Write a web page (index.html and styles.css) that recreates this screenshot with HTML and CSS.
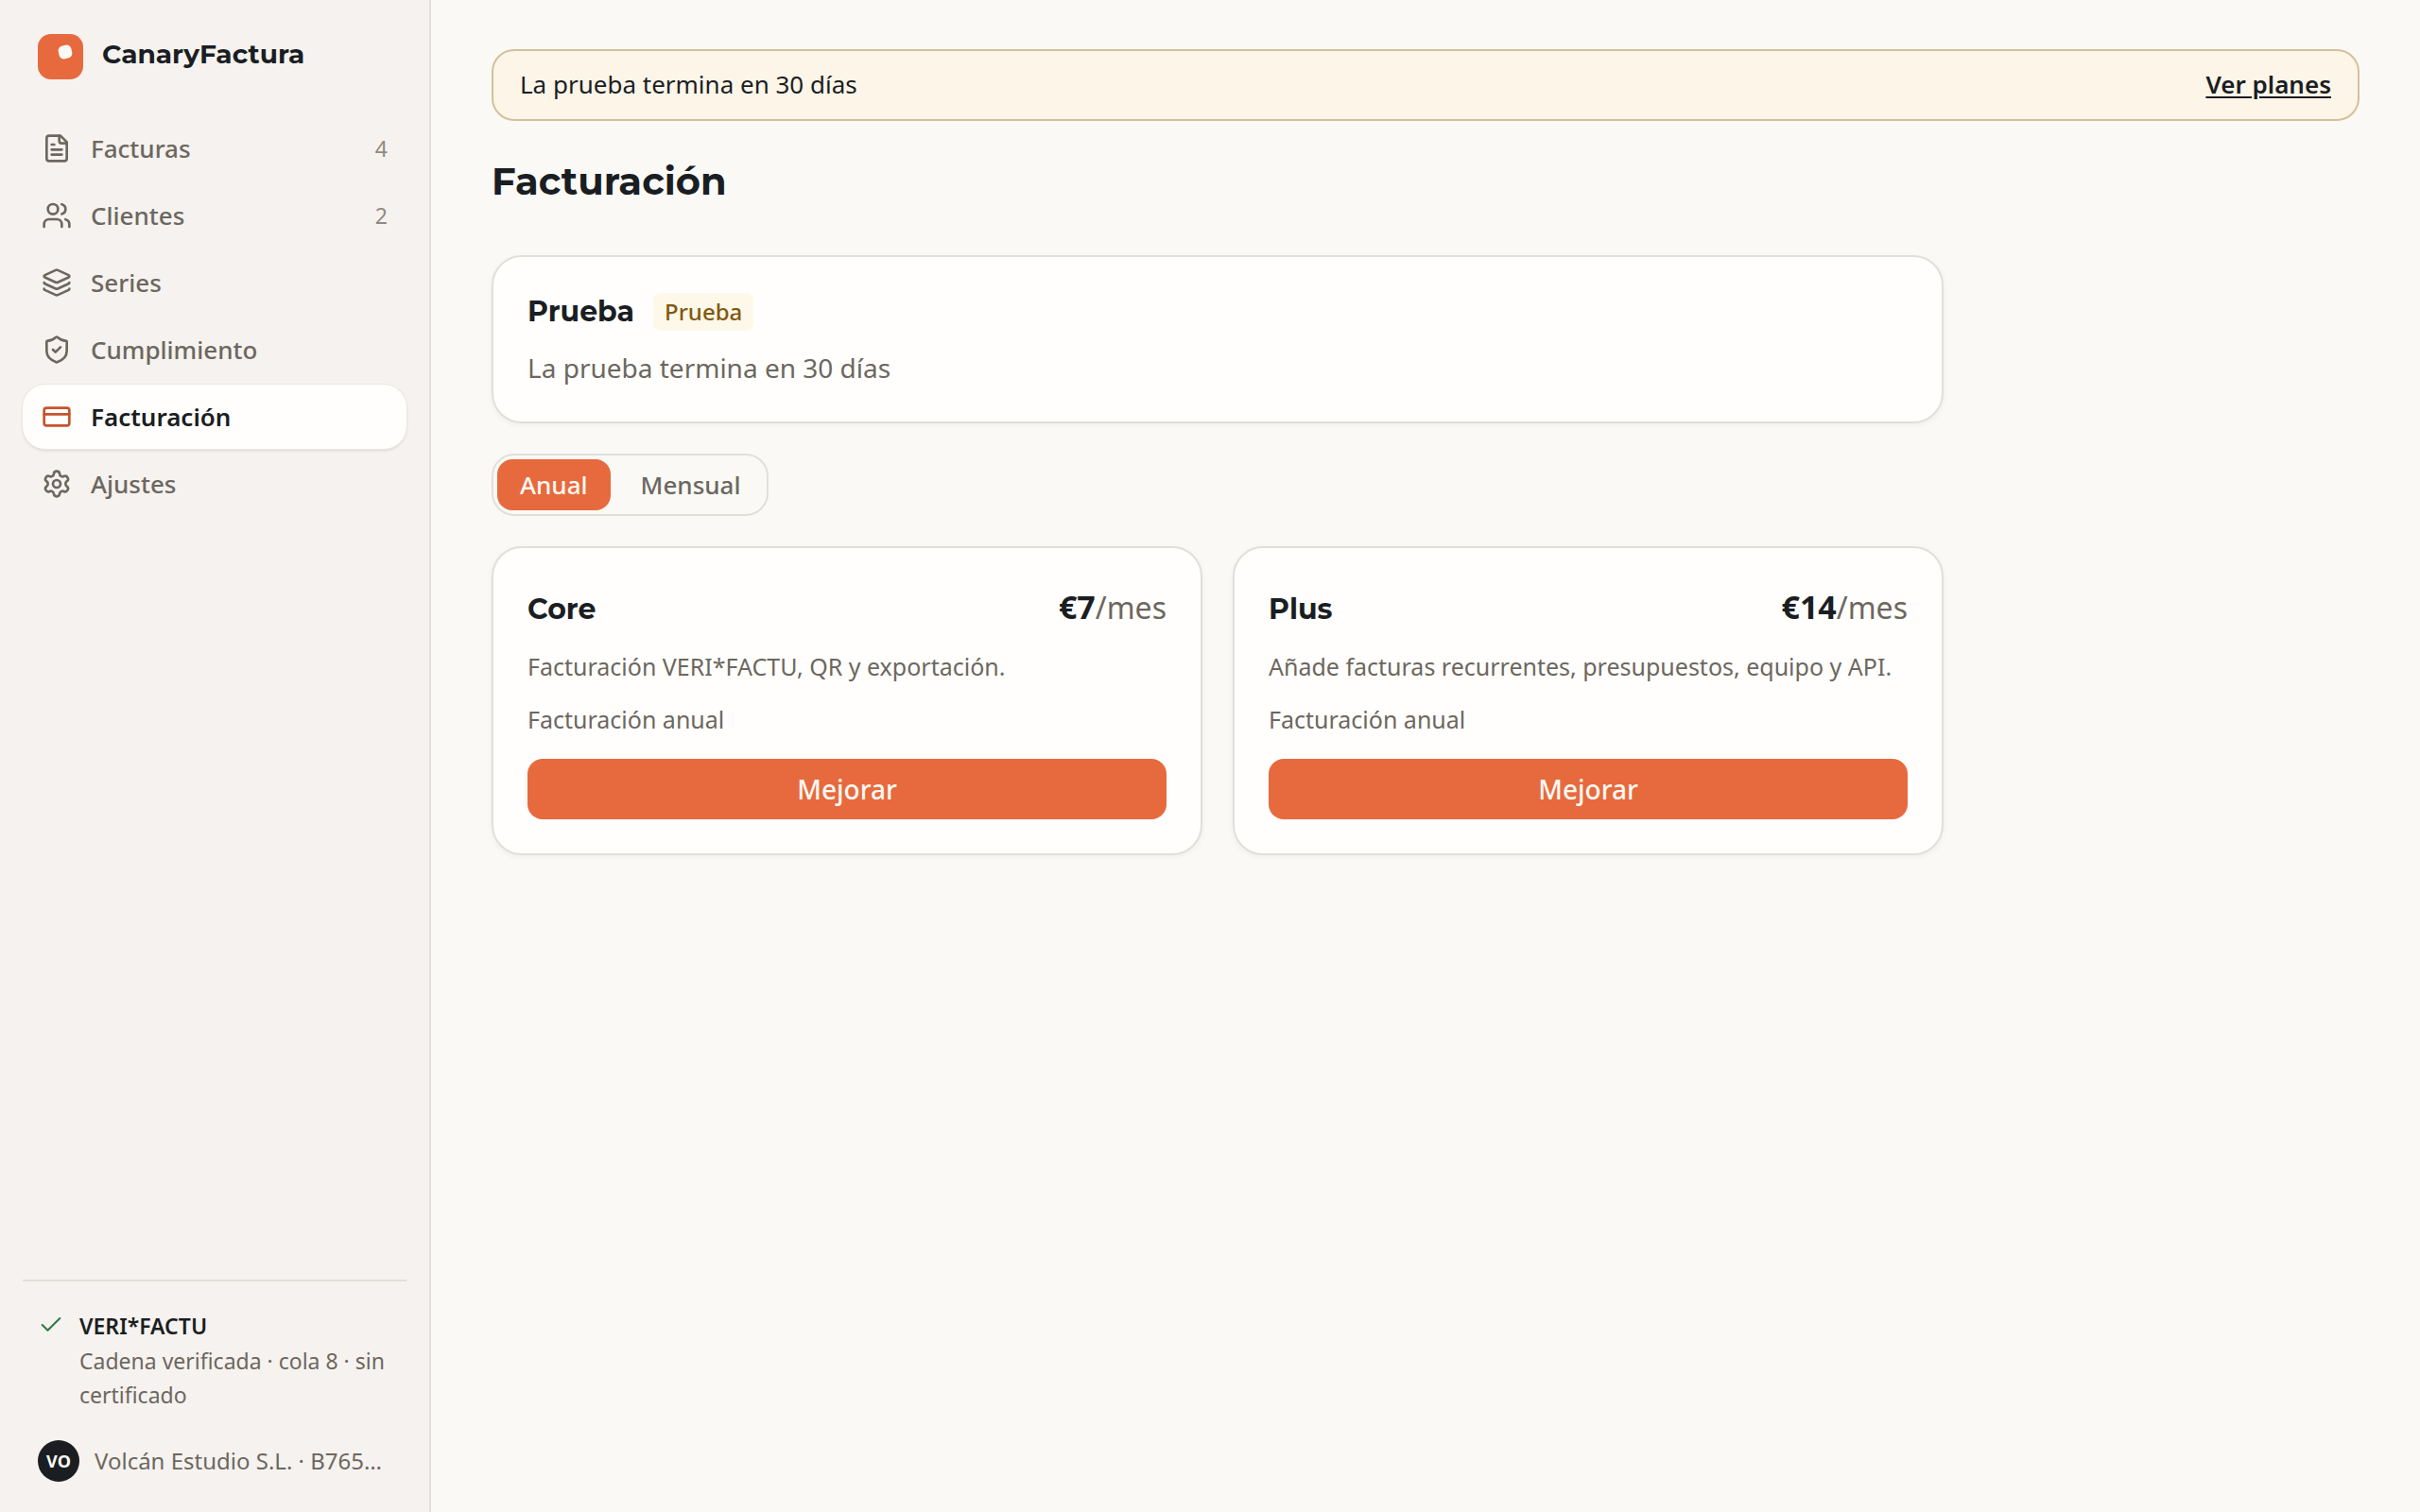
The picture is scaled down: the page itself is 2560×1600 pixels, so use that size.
FILE: index.html
```html
<!DOCTYPE html>
<html lang="es">
<head>
<meta charset="utf-8">
<meta name="viewport" content="width=device-width, initial-scale=1">
<title>Facturación</title>
<link rel="stylesheet" href="styles.css">
</head>
<body>
<div class="app">
  <aside class="sidebar">
    <a class="brand" href="#">
      <svg class="brand-mark" viewBox="0 0 48 48" aria-hidden="true">
        <rect width="48" height="48" rx="14" fill="#e66a3d"/>
        <rect x="22" y="12" width="14" height="14" rx="5" fill="#faf9f5" transform="rotate(-14 29 19)"/>
      </svg>
      <span class="brand-name">CanaryFactura</span>
    </a>
    <nav class="nav">
      <a class="nav-item" href="#">
        <svg class="icon" viewBox="0 0 24 24" aria-hidden="true"><path d="M15 2H6a2 2 0 0 0-2 2v16a2 2 0 0 0 2 2h12a2 2 0 0 0 2-2V7Z"/><path d="M14 2v4a2 2 0 0 0 2 2h4"/><path d="M10 9H8"/><path d="M16 13H8"/><path d="M16 17H8"/></svg>
        <span>Facturas</span><span class="count">4</span>
      </a>
      <a class="nav-item" href="#">
        <svg class="icon" viewBox="0 0 24 24" aria-hidden="true"><path d="M16 21v-2a4 4 0 0 0-4-4H6a4 4 0 0 0-4 4v2"/><circle cx="9" cy="7" r="4"/><path d="M22 21v-2a4 4 0 0 0-3-3.87"/><path d="M16 3.13a4 4 0 0 1 0 7.75"/></svg>
        <span>Clientes</span><span class="count">2</span>
      </a>
      <a class="nav-item" href="#">
        <svg class="icon" viewBox="0 0 24 24" aria-hidden="true"><path d="M12.83 2.18a2 2 0 0 0-1.66 0L2.6 6.08a1 1 0 0 0 0 1.83l8.58 3.91a2 2 0 0 0 1.66 0l8.58-3.9a1 1 0 0 0 0-1.83Z"/><path d="M2 12a1 1 0 0 0 .58.91l8.6 3.91a2 2 0 0 0 1.65 0l8.58-3.9A1 1 0 0 0 22 12"/><path d="M2 17a1 1 0 0 0 .58.91l8.6 3.91a2 2 0 0 0 1.65 0l8.58-3.9A1 1 0 0 0 22 17"/></svg>
        <span>Series</span>
      </a>
      <a class="nav-item" href="#">
        <svg class="icon" viewBox="0 0 24 24" aria-hidden="true"><path d="M20 13c0 5-3.5 7.5-7.66 8.95a1 1 0 0 1-.67-.01C7.5 20.5 4 18 4 13V6a1 1 0 0 1 1-1c2 0 4.5-1.2 6.24-2.72a1.17 1.17 0 0 1 1.52 0C14.51 3.81 17 5 19 5a1 1 0 0 1 1 1z"/><path d="m9 12 2 2 4-4"/></svg>
        <span>Cumplimiento</span>
      </a>
      <a class="nav-item active" href="#" aria-current="page">
        <svg class="icon" viewBox="0 0 24 24" aria-hidden="true"><rect width="20" height="14" x="2" y="5" rx="2"/><path d="M2 10h20"/></svg>
        <span>Facturación</span>
      </a>
      <a class="nav-item" href="#">
        <svg class="icon" viewBox="0 0 24 24" aria-hidden="true"><path d="M9.671 4.136a2.34 2.34 0 0 1 4.659 0 2.34 2.34 0 0 0 3.319 1.915 2.34 2.34 0 0 1 2.33 4.033 2.34 2.34 0 0 0 0 3.831 2.34 2.34 0 0 1-2.33 4.033 2.34 2.34 0 0 0-3.319 1.915 2.34 2.34 0 0 1-4.659 0 2.34 2.34 0 0 0-3.32-1.915 2.34 2.34 0 0 1-2.33-4.033 2.34 2.34 0 0 0 0-3.831A2.34 2.34 0 0 1 6.35 6.051a2.34 2.34 0 0 0 3.319-1.915"/><circle cx="12" cy="12" r="3"/></svg>
        <span>Ajustes</span>
      </a>
    </nav>
    <div class="sidebar-footer">
      <div class="status">
        <svg class="icon icon-check" viewBox="0 0 24 24" aria-hidden="true"><path d="M20 6 9 17l-5-5"/></svg>
        <div>
          <strong class="status-title">VERI*FACTU</strong>
          <p class="status-text">Cadena verificada · cola 8 · sin certificado</p>
        </div>
      </div>
      <div class="account">
        <span class="avatar">VO</span>
        <span class="account-name">Volcán Estudio S.L. · B765…</span>
      </div>
    </div>
  </aside>

  <main class="main">
    <div class="banner">
      <span>La prueba termina en 30 días</span>
      <a href="#">Ver planes</a>
    </div>
    <h1 class="page-title">Facturación</h1>
    <div class="content">
      <section class="card">
        <div class="card-head">
          <h2>Prueba</h2>
          <span class="badge">Prueba</span>
        </div>
        <p class="lead">La prueba termina en 30 días</p>
      </section>
      <div class="toggle" role="group" aria-label="Periodo">
        <button type="button" class="selected" aria-pressed="true">Anual</button>
        <button type="button" aria-pressed="false">Mensual</button>
      </div>
      <div class="plans">
        <section class="card plan">
          <div class="plan-head">
            <h2>Core</h2>
            <p class="price"><strong>€7</strong>/mes</p>
          </div>
          <p class="note">Facturación VERI*FACTU, QR y exportación.</p>
          <p class="note">Facturación anual</p>
          <button type="button" class="upgrade">Mejorar</button>
        </section>
        <section class="card plan">
          <div class="plan-head">
            <h2>Plus</h2>
            <p class="price"><strong>€14</strong>/mes</p>
          </div>
          <p class="note">Añade facturas recurrentes, presupuestos, equipo y API.</p>
          <p class="note">Facturación anual</p>
          <button type="button" class="upgrade">Mejorar</button>
        </section>
      </div>
    </div>
  </main>
</div>
</body>
</html>
```
FILE: styles.css
```css
:root {
  --bg: #faf9f5;
  --sidebar: #f6f2ef;
  --surface: #fffefc;
  --border: #e2dfdb;
  --ink: #1a1e23;
  --muted: #6c675f;
  --faint: #8f8a83;
  --accent: #e66a3d;
  --display: Montserrat, Inter, sans-serif;
}

* { box-sizing: border-box; }

body {
  margin: 0;
  background: var(--bg);
  color: var(--ink);
  font: 26px/40px "Noto Sans", sans-serif;
}

h1, h2, p { margin: 0; }
h1, h2 { font-family: var(--display); font-weight: 700; }
button { font: inherit; border: 0; background: none; cursor: pointer; }

.app { display: flex; min-height: 100vh; }

.icon {
  flex: none;
  width: 32px;
  height: 32px;
  fill: none;
  stroke: currentColor;
  stroke-width: 2;
  stroke-linecap: round;
  stroke-linejoin: round;
}

/* Sidebar */
.sidebar {
  display: flex;
  flex-direction: column;
  flex: none;
  width: 456px;
  padding: 36px 24px 32px;
  background: var(--sidebar);
  border-right: 2px solid var(--border);
}

.brand {
  display: flex;
  align-items: center;
  gap: 20px;
  padding: 0 16px;
  color: var(--ink);
  font: 700 28px/42px var(--display);
  text-decoration: none;
}
.brand-mark { width: 48px; height: 48px; }
.brand-name { padding-bottom: 6px; }

.nav {
  display: flex;
  flex-direction: column;
  gap: 3px;
  margin-top: 39px;
}
.nav-item {
  display: flex;
  align-items: center;
  gap: 20px;
  height: 68px;
  padding: 0 20px;
  border-radius: 24px;
  color: var(--muted);
  font-weight: 500;
  text-decoration: none;
}
.nav-item.active {
  background: var(--surface);
  color: var(--ink);
  font-weight: 600;
  box-shadow: 0 0 0 1px #e9e6e2, 0 2px 3px rgba(26, 30, 35, .12);
}
.nav-item.active .icon { color: #c5532f; }
.count { margin-left: auto; color: var(--faint); font-size: 23px; font-weight: 400; }

.sidebar-footer {
  margin-top: auto;
  padding: 28px 16px 0;
  border-top: 2px solid var(--border);
  font-size: 23px;
  line-height: 36px;
}
.status { display: flex; gap: 16px; }
.icon-check { width: 28px; height: 28px; margin-top: 4px; color: #2c7a4b; stroke-width: 1.75; }
.status-title { display: block; line-height: 38px; font-weight: 600; }
.status-text { color: var(--muted); }
.account {
  display: flex;
  align-items: center;
  gap: 16px;
  margin-top: 30px;
  color: var(--muted);
  font-size: 24px;
}
.avatar {
  display: grid;
  place-items: center;
  flex: none;
  width: 44px;
  height: 44px;
  border-radius: 50%;
  background: var(--ink);
  color: var(--bg);
  font-size: 18px;
  font-weight: 700;
}
.account-name { white-space: nowrap; }

/* Main column */
.main { flex: 1; min-width: 0; padding: 52px 64px; }

.banner {
  display: flex;
  align-items: center;
  justify-content: space-between;
  padding: 15px 28px 17px;
  border: 2px solid #d4c09a;
  border-radius: 24px;
  background: #fdf5e8;
}
.banner a { color: inherit; font-weight: 600; text-underline-offset: 3px; }

.page-title { margin: 36px 0 50px; font-size: 40px; line-height: 56px; }

.content { display: grid; gap: 32px; max-width: 1536px; }

.card {
  padding: 36px;
  border: 2px solid var(--border);
  border-radius: 32px;
  background: var(--surface);
  box-shadow: 0 2px 6px rgba(26, 30, 35, .05);
}
.card h2 { font-size: 30px; line-height: 44px; }
.card-head { display: flex; align-items: center; gap: 20px; }
.badge {
  padding: 2px 12px;
  border-radius: 8px;
  background: #fdf8e9;
  color: #80590f;
  font-size: 24px;
  font-weight: 500;
  line-height: 36px;
}
.lead { margin-top: 16px; color: var(--muted); font-size: 28px; line-height: 42px; }

.toggle {
  display: flex;
  justify-self: start;
  gap: 8px;
  padding: 4px;
  border: 2px solid var(--border);
  border-radius: 24px;
}
.toggle button {
  height: 54px;
  padding: 0 24px;
  border-radius: 16px;
  color: var(--muted);
  font-weight: 500;
}
.toggle .selected { background: var(--accent); color: #fff8f2; }

.plans { display: grid; grid-template-columns: 1fr 1fr; gap: 32px; }
.plan { display: grid; gap: 16px; }
.plan-head { display: flex; align-items: baseline; justify-content: space-between; }
.price { color: var(--muted); font-size: 32px; line-height: 52px; }
.price strong { color: var(--ink); font-size: 34px; }
.note { color: var(--muted); font-size: 25px; }
.upgrade {
  height: 64px;
  margin-top: 6px;
  border-radius: 16px;
  background: var(--accent);
  color: #fff8f2;
  font-size: 28px;
  font-weight: 500;
}
```
